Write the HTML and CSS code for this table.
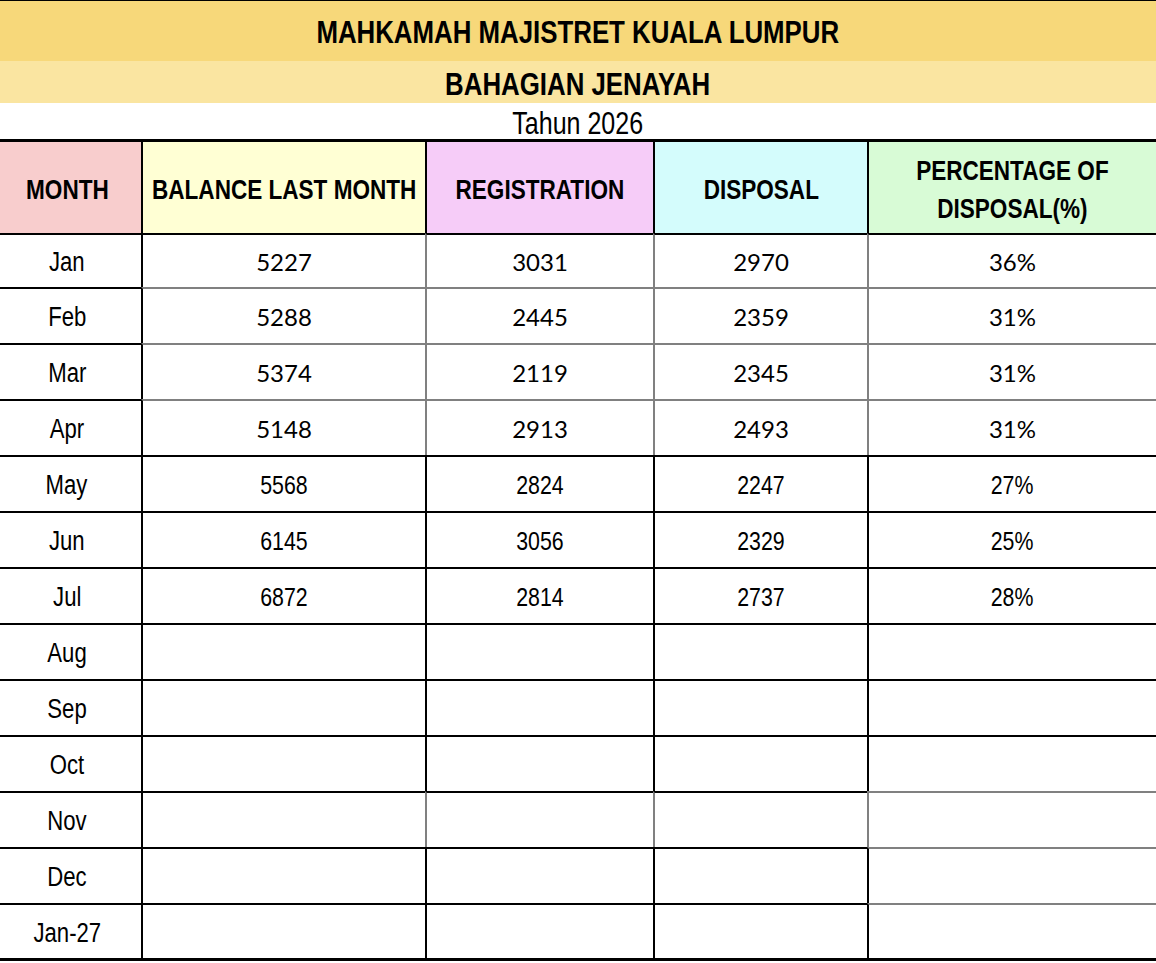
FILE: index.html
```html
<!DOCTYPE html>
<html>
<head>
<meta charset="utf-8">
<title>Mahkamah Majistret Kuala Lumpur</title>
<link rel="stylesheet" href="styles.css">
</head>
<body>
<div class="sheet">
  <div class="band band-main"><span class="n">MAHKAMAH MAJISTRET KUALA LUMPUR</span></div>
  <div class="band band-sub"><span class="n">BAHAGIAN JENAYAH</span></div>
  <div class="year"><span class="n">Tahun 2026</span></div>
  <table class="grid">
    <colgroup>
      <col class="w0"><col class="w1"><col class="w2"><col class="w3"><col class="w4">
    </colgroup>
    <thead>
      <tr class="head">
        <th class="h-month"><div class="hc"><span class="n">MONTH</span></div></th>
        <th class="h-bal"><div class="hc"><span class="n">BALANCE LAST MONTH</span></div></th>
        <th class="h-reg"><div class="hc"><span class="n">REGISTRATION</span></div></th>
        <th class="h-dis"><div class="hc"><span class="n">DISPOSAL</span></div></th>
        <th class="h-pct"><div class="hc"><span class="n two">PERCENTAGE OF<br>DISPOSAL(%)</span></div></th>
      </tr>
    </thead>
    <tbody>
      <tr class="r first">
        <td><span class="n">Jan</span></td><td class="cal">5227</td><td class="cal gl">3031</td><td class="cal gl">2970</td><td class="cal gl">36%</td>
      </tr>
      <tr class="r">
        <td><span class="n">Feb</span></td><td class="cal gt">5288</td><td class="cal gt gl">2445</td><td class="cal gt gl">2359</td><td class="cal gt gl">31%</td>
      </tr>
      <tr class="r">
        <td><span class="n">Mar</span></td><td class="cal gt">5374</td><td class="cal gt gl">2119</td><td class="cal gt gl">2345</td><td class="cal gt gl">31%</td>
      </tr>
      <tr class="r">
        <td><span class="n">Apr</span></td><td class="cal gt">5148</td><td class="cal gt gl">2913</td><td class="cal gt gl">2493</td><td class="cal gt gl">31%</td>
      </tr>
      <tr class="r">
        <td><span class="n">May</span></td><td class="nar"><span class="n">5568</span></td><td class="nar"><span class="n">2824</span></td><td class="nar"><span class="n">2247</span></td><td class="nar"><span class="n">27%</span></td>
      </tr>
      <tr class="r">
        <td><span class="n">Jun</span></td><td class="nar"><span class="n">6145</span></td><td class="nar"><span class="n">3056</span></td><td class="nar"><span class="n">2329</span></td><td class="nar"><span class="n">25%</span></td>
      </tr>
      <tr class="r">
        <td><span class="n">Jul</span></td><td class="nar"><span class="n">6872</span></td><td class="nar"><span class="n">2814</span></td><td class="nar"><span class="n">2737</span></td><td class="nar"><span class="n">28%</span></td>
      </tr>
      <tr class="r">
        <td><span class="n">Aug</span></td><td></td><td></td><td></td><td></td>
      </tr>
      <tr class="r">
        <td><span class="n">Sep</span></td><td></td><td></td><td></td><td></td>
      </tr>
      <tr class="r">
        <td><span class="n">Oct</span></td><td></td><td></td><td></td><td></td>
      </tr>
      <tr class="r">
        <td><span class="n">Nov</span></td><td></td><td class="gl"></td><td class="gl"></td><td class="gt gl"></td>
      </tr>
      <tr class="r">
        <td><span class="n">Dec</span></td><td></td><td></td><td></td><td class="gt"></td>
      </tr>
      <tr class="r last">
        <td><span class="n">Jan-27</span></td><td></td><td></td><td></td><td class="gt"></td>
      </tr>
    </tbody>
  </table>
</div>
</body>
</html>
```

FILE: styles.css
```css
html, body {
  margin: 0;
  padding: 0;
  background: #ffffff;
}

.sheet {
  width: 1156px;
  font-family: "Liberation Sans", Arial, sans-serif;
  color: #000;
}

/* Arial Narrow look: Liberation Sans compressed horizontally */
.n {
  display: inline-block;
  white-space: nowrap;
  transform: scaleX(0.82);
  transform-origin: 50% 50%;
}

.band {
  text-align: center;
  font-weight: bold;
  font-size: 31.5px;
}

.band-main {
  border-top: 1px solid #000;
  height: 60px;
  line-height: 62px;
  background: #f7d87a;
}

.band-sub {
  height: 42px;
  line-height: 46px;
  background: #fae5a1;
}

.year {
  height: 36px;
  line-height: 40px;
  text-align: center;
  font-size: 30.5px;
}

.grid {
  border-collapse: separate;
  border-spacing: 0;
  table-layout: fixed;
  width: 1156px;
}

.w0 { width: 141px; }
.w1 { width: 284px; }
.w2 { width: 228px; }
.w3 { width: 214px; }
.w4 { width: 289px; }

.grid th,
.grid td {
  box-sizing: border-box;
  padding: 0;
  text-align: center;
  vertical-align: middle;
  border-top: 2px solid #000;
  border-left: 2px solid #000;
}

.grid th:first-child,
.grid td:first-child {
  border-left: none;
  padding-right: 7px;
}

.head th {
  height: 94px;
  border-top: 3px solid #000;
  font-weight: bold;
  font-size: 27.5px;
  padding-top: 5px;
}

.hc {
  display: flex;
  justify-content: center;
  align-items: center;
}

.two {
  line-height: 38px;
  text-align: center;
}

.h-month { background: #f8cdcd; }
.h-bal { background: #ffffd4; }
.h-reg { background: #f6ccf8; }
.h-dis { background: #d4fcfc; }
.h-pct { background: #d8fbd6; }

.r td {
  height: 56px;
  font-size: 27px;
  padding-top: 3px;
}

.r.first td {
  height: 54px;
}

.r.last td {
  height: 58px;
  border-bottom: 3px solid #000;
}

.grid td.gt { border-top-color: #808080; }
.grid td.gl { border-left-color: #808080; }

.grid td.cal {
  font-family: Lato, "Open Sans", sans-serif;
  font-size: 24px;
  padding-top: 0;
}

.grid td.nar {
  font-size: 26px;
}
```
